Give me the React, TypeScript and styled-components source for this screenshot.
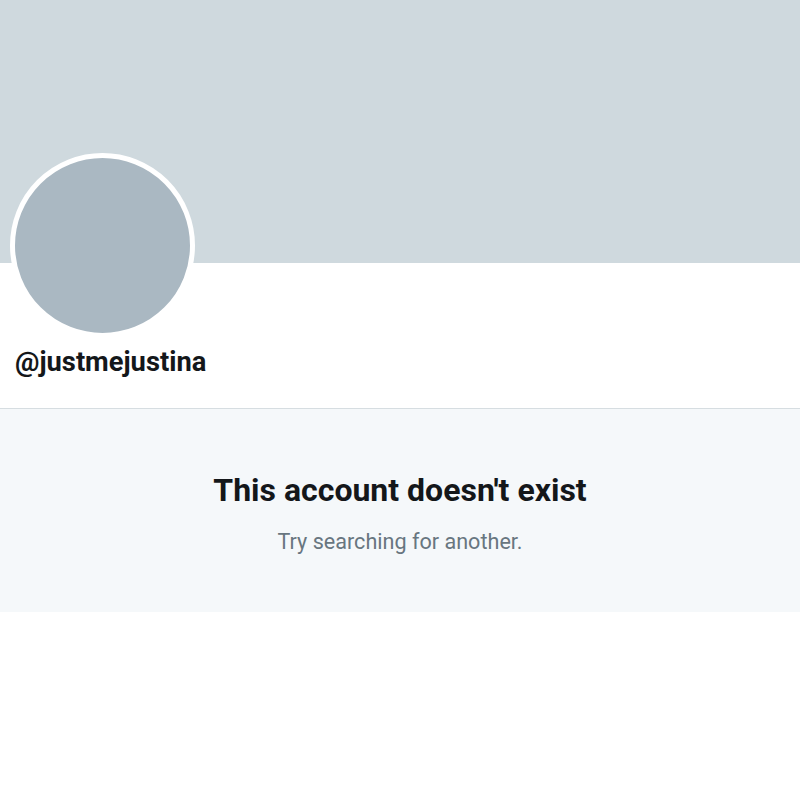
import React from "react";
import styled, { createGlobalStyle } from "styled-components";

const Global = createGlobalStyle`
  html, body { margin: 0; padding: 0; background: #ffffff; }
  body { font-family: Roboto, "Liberation Sans", sans-serif; }
`;

const Page = styled.div`
  width: 800px;
  display: flex;
  flex-direction: column;
`;

const Banner = styled.div`
  height: 263px;
  background: #cfd9de;
`;

const Profile = styled.div`
  display: flex;
  flex-direction: column;
  align-items: flex-start;
  padding: 0 0 0 10px;
  height: 145px;
  border-bottom: 1px solid #d6dde1;
`;

const Avatar = styled.div`
  width: 175px;
  height: 175px;
  margin-top: -110px;
  border-radius: 50%;
  border: 5px solid #ffffff;
  background: #aab8c2;
`;

const Handle = styled.div`
  margin: 8px 0 0 5px;
  font-size: 27.3px;
  font-weight: 700;
  color: #14171a;
  line-height: 32px;
`;

const Empty = styled.div`
  height: 203px;
  background: #f5f8fa;
  display: flex;
  flex-direction: column;
  align-items: center;
  padding-top: 63px;
  box-sizing: border-box;
`;

const Title = styled.div`
  font-size: 32px;
  font-weight: 700;
  color: #14171a;
  line-height: 36px;
`;

const Subtitle = styled.div`
  margin-top: 21px;
  font-size: 21.6px;
  color: #687680;
  line-height: 26px;
`;

export default function App() {
  return (
    <Page>
      <Global />
      <Banner />
      <Profile>
        <Avatar />
        <Handle>@justmejustina</Handle>
      </Profile>
      <Empty>
        <Title>This account doesn't exist</Title>
        <Subtitle>Try searching for another.</Subtitle>
      </Empty>
    </Page>
  );
}
